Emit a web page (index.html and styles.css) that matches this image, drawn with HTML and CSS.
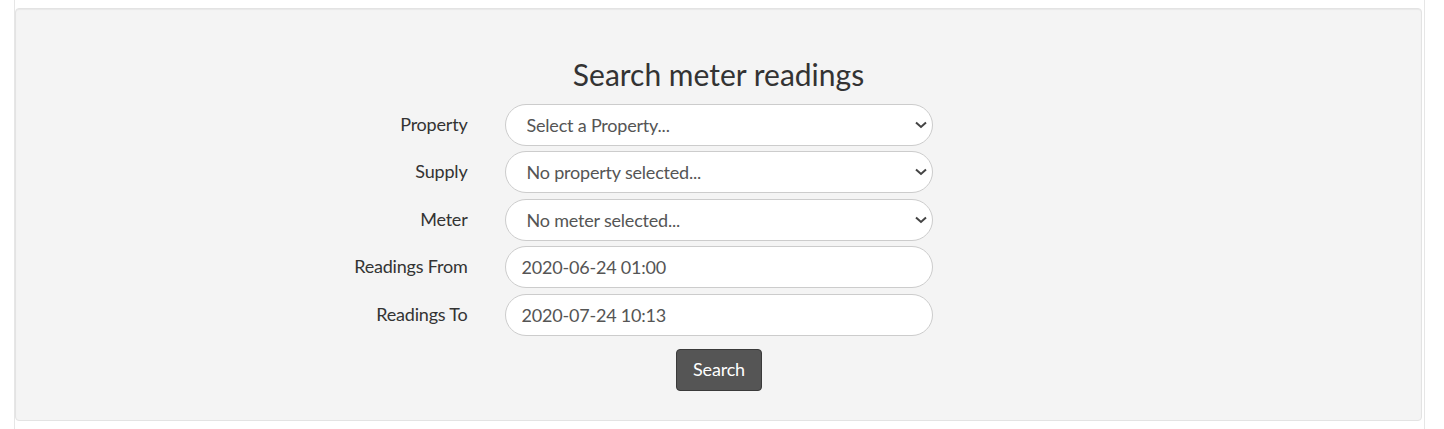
FILE: index.html
```html
<!DOCTYPE html>
<html lang="en">
<head>
<meta charset="utf-8">
<title>Search meter readings</title>
<link rel="stylesheet" href="styles.css">
</head>
<body>
<div class="page">
  <div class="well">
    <h2 class="title">Search meter readings</h2>
    <form class="form">
      <label class="label" for="property">Property</label>
      <div class="control select-wrap">
        <select id="property" class="field select">
          <option>Select a Property...</option>
        </select>
        <svg class="chev" width="12" height="8" viewBox="0 0 12 8"><path d="M1 1.5 L6 6 L11 1.5" fill="none" stroke="#444" stroke-width="2"/></svg>
      </div>

      <label class="label" for="supply">Supply</label>
      <div class="control select-wrap">
        <select id="supply" class="field select">
          <option>No property selected...</option>
        </select>
        <svg class="chev" width="12" height="8" viewBox="0 0 12 8"><path d="M1 1.5 L6 6 L11 1.5" fill="none" stroke="#444" stroke-width="2"/></svg>
      </div>

      <label class="label" for="meter">Meter</label>
      <div class="control select-wrap">
        <select id="meter" class="field select">
          <option>No meter selected...</option>
        </select>
        <svg class="chev" width="12" height="8" viewBox="0 0 12 8"><path d="M1 1.5 L6 6 L11 1.5" fill="none" stroke="#444" stroke-width="2"/></svg>
      </div>

      <label class="label" for="from">Readings From</label>
      <div class="control">
        <input id="from" class="field" type="text" value="2020-06-24 01:00">
      </div>

      <label class="label" for="to">Readings To</label>
      <div class="control">
        <input id="to" class="field" type="text" value="2020-07-24 10:13">
      </div>

      <div class="actions">
        <button type="button" class="btn">Search</button>
      </div>
    </form>
  </div>
</div>
</body>
</html>
```

FILE: styles.css
```css
* { box-sizing: border-box; }

html, body {
  margin: 0;
  padding: 0;
  background: #ffffff;
  font-family: Lato, "Open Sans", "Liberation Sans", sans-serif;
  color: #333333;
}

.page {
  margin-left: 14px;
  width: 1411px;
  min-height: 429px;
  padding-top: 8px;
  border-left: 1px solid #e6e6e6;
  border-right: 1px solid #e6e6e6;
}

.well {
  margin-right: 2px;
  background: #f4f4f4;
  border: 1px solid #e3e3e3;
  border-radius: 4px;
  box-shadow: inset 0 1px 1px rgba(0, 0, 0, 0.05);
  padding: 45px 0 29px;
  height: 413px;
}

.title {
  margin: 0 0 9.5px;
  text-align: center;
  font-weight: 400;
  font-size: 30px;
  line-height: 40px;
  color: #333333;
}

.form {
  display: grid;
  grid-template-columns: 1fr 428px 1fr;
  row-gap: 5.5px;
}

.label {
  grid-column: 1;
  text-align: right;
  padding-right: 37px;
  font-size: 18px;
  letter-spacing: -0.2px;
  line-height: 42px;
  height: 42px;
  margin-top: -1px;
  color: #333333;
}

.control {
  grid-column: 2;
  position: relative;
  height: 42px;
}

.field {
  display: block;
  width: 100%;
  height: 42px;
  margin: 0;
  padding: 0 16px;
  border: 1px solid #cccccc;
  border-radius: 21px;
  background: #ffffff;
  font-family: Lato, "Open Sans", "Liberation Sans", sans-serif;
  font-size: 18px;
  letter-spacing: -0.2px;
  color: #555555;
  outline: none;
}

.select {
  -webkit-appearance: none;
  appearance: none;
  padding-left: 21px;
  padding-right: 36px;
}

.chev {
  position: absolute;
  right: 6px;
  top: 17px;
  width: 12px;
  height: 8px;
  pointer-events: none;
}

.actions {
  grid-column: 1 / 4;
  display: flex;
  justify-content: center;
  margin-top: 7.5px;
  padding-left: 1px;
}

.btn {
  height: 42px;
  padding: 0 16px 1px;
  background: #555555;
  border: 1px solid #3a3a3a;
  border-radius: 4px;
  color: #ffffff;
  font-family: Lato, "Open Sans", "Liberation Sans", sans-serif;
  font-size: 18px;
  letter-spacing: -0.2px;
  cursor: pointer;
}
```
